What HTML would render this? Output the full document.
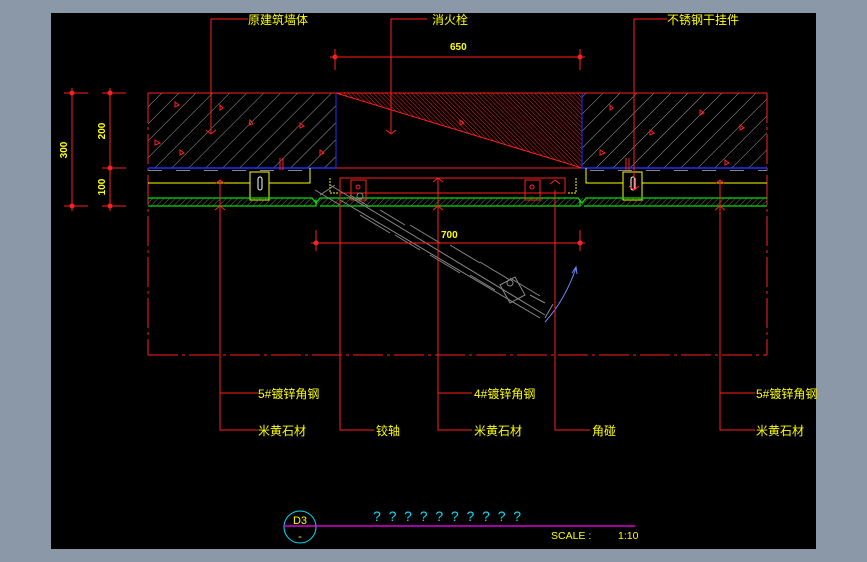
<!DOCTYPE html>
<html><head><meta charset="utf-8"><style>
html,body{margin:0;padding:0;background:#8a98a8;width:867px;height:562px;overflow:hidden}
svg{display:block}
text{font-family:"Liberation Sans","Noto Sans CJK SC",sans-serif;fill:#ffff00}
</style></head><body>
<svg width="867" height="562" viewBox="0 0 867 562" xmlns="http://www.w3.org/2000/svg">
<defs>
<pattern id="h1" width="12" height="12" patternUnits="userSpaceOnUse" patternTransform="rotate(45)">
<line x1="0" y1="0" x2="0" y2="12" stroke="#b0b0b0" stroke-width="0.9"/></pattern>
<pattern id="h2" width="3" height="3" patternUnits="userSpaceOnUse" patternTransform="rotate(-45)">
<line x1="0" y1="0" x2="0" y2="3" stroke="#ff2020" stroke-width="1"/></pattern>
<pattern id="h3" width="4" height="4" patternUnits="userSpaceOnUse" patternTransform="rotate(45)">
<line x1="0" y1="0" x2="0" y2="4" stroke="#888" stroke-width="0.8"/></pattern>
</defs>
<rect x="51" y="13" width="765" height="536" fill="#000"/>
<!-- wall -->
<rect x="148" y="93" width="188" height="75" fill="url(#h1)"/>
<rect x="582" y="93" width="185" height="75" fill="url(#h1)"/>
<polygon points="336,93 582,93 582,168" fill="url(#h2)" stroke="#ff2020"/>
<g fill="none" stroke="#ff2020" stroke-width="1">
<line x1="148" y1="93" x2="767" y2="93"/>
<line x1="148" y1="168" x2="767" y2="168"/>
<line x1="148" y1="93" x2="148" y2="355" stroke-dasharray="30,4,3,4"/>
<line x1="767" y1="93" x2="767" y2="355" stroke-dasharray="30,4,3,4"/>
<line x1="148" y1="355" x2="767" y2="355" stroke-dasharray="30,4,3,4"/>
<path d="M175,102l4,3-4,2zM300,123l4,3-4,2zM460,120l4,3-4,2zM650,130l4,3-4,2zM700,110l4,3-4,2zM250,120l3,4-4,1zM600,150l5,3-5,2zM180,150l4,3-4,2zM740,125l4,3-4,2zM155,140l5,3-5,2zM220,105l3,3-3,2zM320,150l4,3-4,2zM725,160l4,3-4,2zM610,105l3,3-3,2z" stroke-width="1"/>
</g>
<line x1="148" y1="168" x2="336" y2="168" stroke="#2030ff" stroke-width="1.5"/>
<line x1="582" y1="168" x2="767" y2="168" stroke="#2030ff" stroke-width="1.5"/>
<line x1="336" y1="93" x2="336" y2="168" stroke="#2030ff"/>
<line x1="582" y1="93" x2="582" y2="168" stroke="#2030ff"/>
<line x1="148" y1="170.5" x2="310" y2="170.5" stroke="#888" stroke-dasharray="14,14"/>
<line x1="590" y1="170.5" x2="767" y2="170.5" stroke="#888" stroke-dasharray="14,14"/>
<!-- yellow -->
<g stroke="#ffff00" fill="none">
<path d="M148,183H310V168"/><path d="M767,183H586V168"/>
<rect x="250" y="172" width="19" height="28" fill="#000"/>
<rect x="623" y="172" width="19" height="28" fill="#000"/>
<path d="M330,178v15h8M576,178v15h-8" stroke-dasharray="2,1"/>
</g>
<g stroke="#fff" fill="none"><rect x="258" y="177" width="4" height="13" rx="2"/><rect x="631" y="177" width="4" height="13" rx="2"/></g>
<!-- stone -->
<rect x="148" y="198" width="619" height="8" fill="url(#h3)"/>
<g stroke="#00e000" fill="none" stroke-width="1.3">
<path d="M148,198H312l4,5 4,-5H578l4,5 4,-5H767"/>
<path d="M148,206H316V200M320,206H580V200M584,206H767"/>
</g>
<!-- door -->
<g stroke="#ff2020" fill="none">
<rect x="340" y="178" width="225" height="15"/>
<rect x="351" y="180" width="15" height="20"/>
<rect x="525" y="180" width="15" height="20"/>
<circle cx="358" cy="187" r="2"/><circle cx="532" cy="187" r="2"/>
</g>
<g stroke="#888" fill="none" stroke-width="1">
<path d="M330,185l215,130M340,200l200,118M350,195l20,12M380,210l25,15M410,225l30,18M450,245l30,18M480,262l30,18M510,278l30,18"/>
<path d="M360,215l30,18M395,235l25,15M430,255l30,18M470,275l25,15"/>
<path d="M315,190l25,15M320,195l15,-10M500,285l15,-8 10,18-15,8zM530,295l15,8M545,318l8,-14"/>
<circle cx="510" cy="283" r="3"/><circle cx="360" cy="196" r="3"/>
</g>
<path d="M545,322Q565,300 576,268" stroke="#6a8cff" fill="none"/>
<path d="M572,273l4,-6 1,7" stroke="#6a8cff" fill="none"/>
<!-- dims -->
<g stroke="#ff2020" fill="#ff2020">
<line x1="64" y1="93" x2="88" y2="93"/><line x1="64" y1="206" x2="88" y2="206"/>
<line x1="72" y1="88" x2="72" y2="211"/>
<line x1="102" y1="93" x2="126" y2="93"/><line x1="102" y1="168" x2="126" y2="168"/><line x1="102" y1="206" x2="126" y2="206"/>
<line x1="110" y1="88" x2="110" y2="211"/>
<circle cx="72" cy="93" r="2"/><circle cx="72" cy="206" r="2"/><circle cx="110" cy="93" r="2"/><circle cx="110" cy="168" r="2"/><circle cx="110" cy="206" r="2"/>
<line x1="330" y1="57" x2="585" y2="57"/><line x1="335" y1="49" x2="335" y2="70"/><line x1="580" y1="49" x2="580" y2="70"/>
<circle cx="335" cy="57" r="2"/><circle cx="580" cy="57" r="2"/>
<line x1="311" y1="243" x2="585" y2="243"/><line x1="316" y1="230" x2="316" y2="251"/><line x1="580" y1="230" x2="580" y2="251"/>
<circle cx="316" cy="243" r="2"/><circle cx="580" cy="243" r="2"/>
</g>
<g stroke="#ff2020" fill="none" stroke-width="1">
<path d="M248,19H211V133M206,130l5,4 5,-4"/>
<path d="M427,19H391V133M386,130l5,4 5,-4"/>
<path d="M667,19H634V190M629,186l5,4 5,-4"/>
<path d="M220,180V430H258M220,393H258M215,184l5,-4 5,4M215,210l5,-4 5,4"/>
<path d="M340,190V430H374"/>
<path d="M438,178V430H472M438,393H472M433,182l5,-4 5,4M433,210l5,-4 5,4"/>
<path d="M555,190V430H590M550,184l5,-4 5,4"/>
<path d="M720,180V430H755M720,393H755M715,184l5,-4 5,4M715,210l5,-4 5,4"/>
<path d="M280,158v12M283,158v12"/><path d="M626,158v12M629,158v12"/>
</g>
<!-- texts -->
<g font-size="12">
<text x="248" y="24">原建筑墙体</text>
<text x="432" y="24">消火栓</text>
<text x="667" y="24">不锈钢干挂件</text>
<text x="258" y="398">5#镀锌角钢</text>
<text x="258" y="435">米黄石材</text>
<text x="376" y="435">铰轴</text>
<text x="474" y="398">4#镀锌角钢</text>
<text x="474" y="435">米黄石材</text>
<text x="592" y="435">角碰</text>
<text x="756" y="398">5#镀锌角钢</text>
<text x="756" y="435">米黄石材</text>
</g>
<g font-size="10" font-weight="bold">
<text x="450" y="50">650</text>
<text x="441" y="238">700</text>
<text transform="translate(67,150) rotate(-90)" text-anchor="middle">300</text>
<text transform="translate(105,131) rotate(-90)" text-anchor="middle">200</text>
<text transform="translate(105,187) rotate(-90)" text-anchor="middle">100</text>
</g>
<!-- title -->
<circle cx="300" cy="527" r="16" stroke="#00e0ff" fill="none"/>
<line x1="284" y1="526" x2="635" y2="526" stroke="#ff00ff" stroke-width="1.3"/>
<text x="300" y="524" font-size="11" text-anchor="middle">D3</text>
<text x="300" y="540" font-size="11" text-anchor="middle">-</text>
<text x="373" y="521" font-size="14" style="fill:#00e0ff;letter-spacing:7.8px">??????????</text>
<text x="551" y="539" font-size="10.5">SCALE :</text>
<text x="618" y="539" font-size="10.5">1:10</text>
</svg>
</body></html>
